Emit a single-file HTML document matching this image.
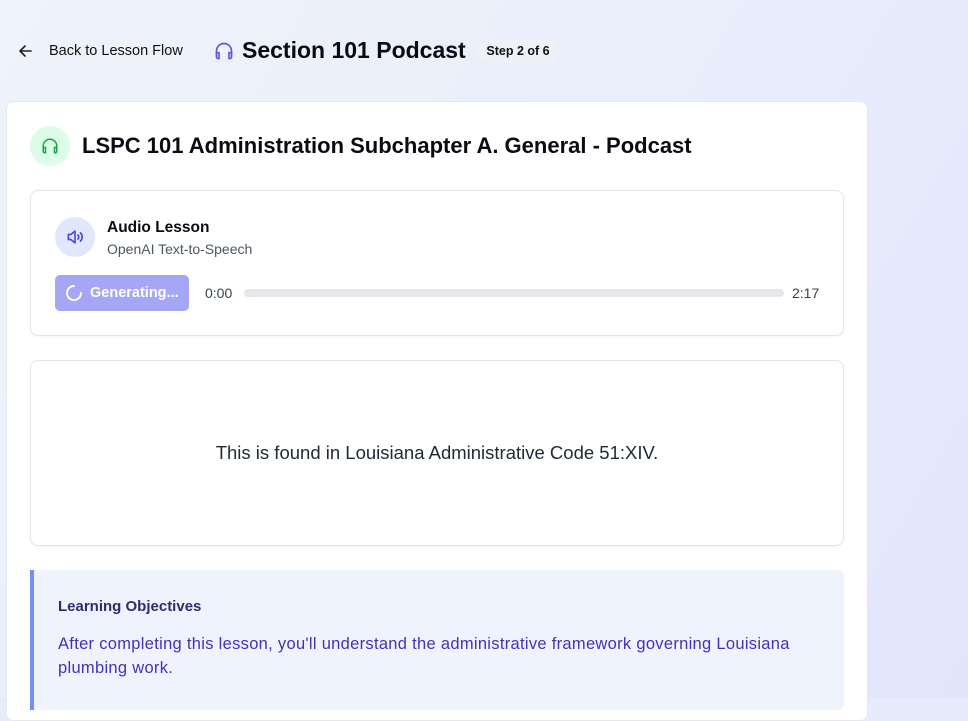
<!DOCTYPE html>
<html style="background:#e8ebfb"><head><style>
*{box-sizing:border-box;margin:0;padding:0}
body{width:968px;height:698px;overflow:hidden;font-family:"Liberation Sans",sans-serif;background:linear-gradient(120deg,#eff3fb 0%,#eaeefb 50%,#e3e5fb 100%);position:relative;color:#0b0b14}
.abs{position:absolute}
.card{left:6px;top:101px;width:862px;height:620px;background:#fff;border-radius:8px;border:1px solid #e6e8ee}
.box{background:#fff;border:1px solid #e3e5ea;border-radius:8px;box-shadow:0 1px 2px rgba(0,0,0,.04)}
</style></head><body>
<svg class="abs" style="left:17px;top:44px" width="16" height="14" viewBox="0 0 16 14"><path d="M14 7H3M8 2L3 7l5 5" stroke="#222" stroke-width="1.6" fill="none" stroke-linecap="round" stroke-linejoin="round"/></svg>
<div class="abs" style="left:49px;top:43px;font-size:14.5px;color:#111">Back to Lesson Flow</div>
<svg class="abs" style="left:214px;top:41px" width="20" height="20" viewBox="0 0 24 24" fill="none" stroke="#5b5bd6" stroke-width="2" stroke-linecap="round"><path d="M3 18v-6a9 9 0 0118 0v6"/><path d="M21 19a2 2 0 01-2 2h-1v-7h3zM3 19a2 2 0 002 2h1v-7H3z"/></svg>
<div class="abs" style="left:242px;top:37px;font-size:23px;font-weight:bold;color:#0b0b14">Section 101 Podcast</div>
<div class="abs" style="left:477px;top:39px;width:82px;height:24px;border-radius:12px;background:#eef1f7;font-size:12.5px;font-weight:bold;text-align:center;line-height:24px;color:#111">Step 2 of 6</div>
<div class="abs card"></div>
<div class="abs" style="left:30px;top:126px;width:40px;height:40px;border-radius:50%;background:#dcfce7"></div>
<svg class="abs" style="left:41px;top:137px" width="18" height="18" viewBox="0 0 24 24" fill="none" stroke="#16a34a" stroke-width="2" stroke-linecap="round"><path d="M3 18v-6a9 9 0 0118 0v6"/><path d="M21 19a2 2 0 01-2 2h-1v-7h3zM3 19a2 2 0 002 2h1v-7H3z"/></svg>
<div class="abs" style="left:82px;top:133px;font-size:22px;font-weight:bold;letter-spacing:0">LSPC 101 Administration Subchapter A. General - Podcast</div>
<div class="abs box" style="left:30px;top:190px;width:814px;height:146px"></div>
<div class="abs" style="left:55px;top:217px;width:40px;height:40px;border-radius:50%;background:#e0e7ff"></div>
<svg class="abs" style="left:65px;top:227px" width="20" height="20" viewBox="0 0 24 24" fill="none" stroke="#4f46e5" stroke-width="2" stroke-linecap="round" stroke-linejoin="round"><path d="M4 9h3l5-4v14l-5-4H4z"/><path d="M15.5 9.5a3.5 3.5 0 010 5M18.5 7a7 7 0 010 10"/></svg>
<div class="abs" style="left:107px;top:219px;font-size:15.5px;font-weight:bold">Audio Lesson</div>
<div class="abs" style="left:107px;top:241px;font-size:14px;color:#4b5563">OpenAI Text-to-Speech</div>
<div class="abs" style="left:55px;top:275px;width:134px;height:36px;border-radius:5px;background:#a5a6f6"></div>
<svg class="abs" style="left:65px;top:284px" width="18" height="18" viewBox="0 0 18 18"><path d="M9 2a7 7 0 107 7" stroke="#fff" stroke-width="2" fill="none" stroke-linecap="round"/></svg>
<div class="abs" style="left:90px;top:285px;font-size:14.5px;font-weight:bold;color:#fff">Generating...</div>
<div class="abs" style="left:205px;top:285px;font-size:14px;color:#374151">0:00</div>
<div class="abs" style="left:244px;top:289px;width:540px;height:8px;border-radius:4px;background:#e5e7eb"></div>
<div class="abs" style="left:792px;top:285px;font-size:14px;color:#374151">2:17</div>
<div class="abs box" style="left:30px;top:360px;width:814px;height:186px"></div>
<div class="abs" style="left:30px;top:442px;width:814px;text-align:center;font-size:18.5px;color:#1f2937">This is found in Louisiana Administrative Code 51:XIV.</div>
<div class="abs" style="left:30px;top:570px;width:814px;height:140px;background:#eff3fe;border-left:4px solid #7590f5;border-radius:0 6px 6px 0"></div>
<div class="abs" style="left:58px;top:598px;font-size:15px;font-weight:bold;color:#2b2e6e">Learning Objectives</div>
<div class="abs" style="left:58px;top:632px;width:740px;font-size:16.5px;line-height:24px;color:#4730b8;letter-spacing:0.3px">After completing this lesson, you'll understand the administrative framework governing Louisiana plumbing work.</div>
</body></html>
